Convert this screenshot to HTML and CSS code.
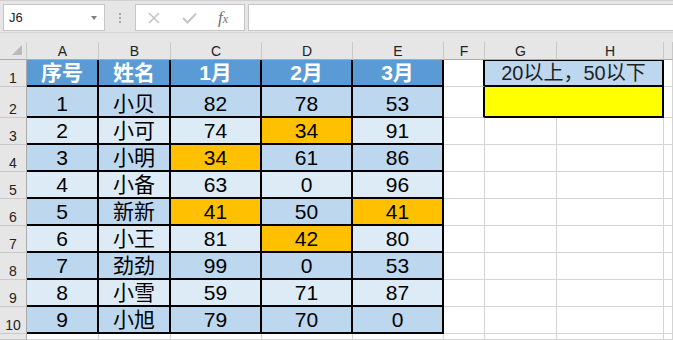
FILE: index.html
```html
<!DOCTYPE html>
<html lang="zh">
<head>
    <meta charset="UTF-8">
    <meta name="viewport" content="width=device-width, initial-scale=1.0">
    <title>成绩表</title>
    <link rel="stylesheet" href="styles.css">
</head>
<body>
<div class="toolbar">
    <div class="namebox">
        <span>J6</span>
        <span class="arrow"></span>
    </div>
    <div class="dots"><i></i><i></i><i></i></div>
    <div class="fbox">
        <svg width="12" height="12" viewBox="0 0 12 12"><path d="M1 1 L11 11 M11 1 L1 11" stroke="#c4c4c4" stroke-width="1.6" fill="none"/></svg>
        <svg width="15" height="12" viewBox="0 0 15 12"><path d="M1 6 L5.5 10.5 L14 1.5" stroke="#c4c4c4" stroke-width="2" fill="none"/></svg>
        <span class="fx">f<small>x</small></span>
    </div>
    <div class="finput"></div>
</div>

<div class="sheet">
    <!-- column headers -->
    <div class="hd corner"><span class="tri"></span></div>
    <div class="hd">A</div>
    <div class="hd">B</div>
    <div class="hd">C</div>
    <div class="hd">D</div>
    <div class="hd">E</div>
    <div class="hd">F</div>
    <div class="hd">G</div>
    <div class="hd">H</div>
    <div class="hd"></div>

    <!-- row 1 -->
    <div class="rh">1</div>
    <div class="t top">序号</div>
    <div class="t top">姓名</div>
    <div class="t top">1月</div>
    <div class="t top">2月</div>
    <div class="t top">3月</div>
    <div class="c fb"></div>
    <div class="m note">20以上，50以下</div>
    <div class="c"></div>

    <!-- row 2 -->
    <div class="rh">2</div>
    <div class="t dk">1</div>
    <div class="t dk">小贝</div>
    <div class="t dk">82</div>
    <div class="t dk">78</div>
    <div class="t dk">53</div>
    <div class="c fb"></div>
    <div class="m yellow"></div>
    <div class="c"></div>

    <!-- row 3 -->
    <div class="rh">3</div>
    <div class="t lt">2</div>
    <div class="t lt">小可</div>
    <div class="t lt">74</div>
    <div class="t or">34</div>
    <div class="t lt">91</div>
    <div class="c"></div><div class="c"></div><div class="c"></div><div class="c"></div>

    <!-- row 4 -->
    <div class="rh">4</div>
    <div class="t dk">3</div>
    <div class="t dk">小明</div>
    <div class="t or">34</div>
    <div class="t dk">61</div>
    <div class="t dk">86</div>
    <div class="c"></div><div class="c"></div><div class="c"></div><div class="c"></div>

    <!-- row 5 -->
    <div class="rh">5</div>
    <div class="t lt">4</div>
    <div class="t lt">小备</div>
    <div class="t lt">63</div>
    <div class="t lt">0</div>
    <div class="t lt">96</div>
    <div class="c"></div><div class="c"></div><div class="c"></div><div class="c"></div>

    <!-- row 6 -->
    <div class="rh">6</div>
    <div class="t dk">5</div>
    <div class="t dk">新新</div>
    <div class="t or">41</div>
    <div class="t dk">50</div>
    <div class="t or">41</div>
    <div class="c"></div><div class="c"></div><div class="c"></div><div class="c"></div>

    <!-- row 7 -->
    <div class="rh">7</div>
    <div class="t lt">6</div>
    <div class="t lt">小王</div>
    <div class="t lt">81</div>
    <div class="t or">42</div>
    <div class="t lt">80</div>
    <div class="c"></div><div class="c"></div><div class="c"></div><div class="c"></div>

    <!-- row 8 -->
    <div class="rh">8</div>
    <div class="t dk">7</div>
    <div class="t dk">劲劲</div>
    <div class="t dk">99</div>
    <div class="t dk">0</div>
    <div class="t dk">53</div>
    <div class="c"></div><div class="c"></div><div class="c"></div><div class="c"></div>

    <!-- row 9 -->
    <div class="rh">9</div>
    <div class="t lt">8</div>
    <div class="t lt">小雪</div>
    <div class="t lt">59</div>
    <div class="t lt">71</div>
    <div class="t lt">87</div>
    <div class="c"></div><div class="c"></div><div class="c"></div><div class="c"></div>

    <!-- row 10 -->
    <div class="rh">10</div>
    <div class="t dk">9</div>
    <div class="t dk">小旭</div>
    <div class="t dk">79</div>
    <div class="t dk">70</div>
    <div class="t dk">0</div>
    <div class="c"></div><div class="c"></div><div class="c"></div><div class="c"></div>

    <!-- row 11, only its top edge shows -->
    <div class="rh"></div>
    <div class="c"></div><div class="c"></div><div class="c"></div><div class="c"></div><div class="c"></div>
    <div class="c"></div><div class="c"></div><div class="c"></div><div class="c"></div>
</div>
</body>
</html>
```

FILE: styles.css
```css
* {
    box-sizing: border-box;
}

body {
    margin: 0;
    width: 673px;
    height: 340px;
    overflow: hidden;
    background-color: #e6e6e6;
    font-family: "Liberation Sans", "Noto Sans CJK SC", sans-serif;
    color: #000;
}

/* formula bar */
.toolbar {
    display: flex;
    height: 33px;
    margin-bottom: 9px;
    padding: 3px 0 0 3px;
    border-top: 1px solid #cfcfcf;
    border-bottom: 1px solid #d6d6d6;
}

.namebox {
    width: 102px;
    height: 27px;
    display: flex;
    align-items: center;
    justify-content: space-between;
    padding: 0 7px 0 5px;
    background-color: #fff;
    border: 1px solid #c6c6c6;
    font-size: 13px;
    color: #222;
}

.arrow {
    width: 0;
    height: 0;
    border-left: 3.5px solid transparent;
    border-right: 3.5px solid transparent;
    border-top: 4px solid #7f7f7f;
}

.dots {
    width: 30px;
    height: 27px;
    display: flex;
    flex-direction: column;
    align-items: center;
    justify-content: center;
    gap: 2px;
}

.dots i {
    width: 2px;
    height: 2px;
    background-color: #a8a8a8;
}

.fbox {
    width: 110px;
    height: 27px;
    display: flex;
    align-items: center;
    padding-left: 12px;
    gap: 22px;
    background-color: #fff;
    border: 1px solid #c6c6c6;
}

.fx {
    font-family: "Liberation Serif", serif;
    font-style: italic;
    font-size: 17px;
    color: #6f6f6f;
    margin-left: -1px;
}

.fx small {
    font-size: 12px;
}

.finput {
    flex: 1;
    height: 27px;
    margin-left: 3px;
    background-color: #fff;
    border: 1px solid #c6c6c6;
    border-right: none;
}

/* sheet grid */
.sheet {
    display: grid;
    grid-template-columns: 27px 72px 72px 91px 91px 91px 41px 72px 107px 1fr;
    grid-template-rows: 18px 27px 31px repeat(8, 27px) 1fr;
    height: 298px;
    background-color: #fff;
}

.hd {
    display: flex;
    justify-content: center;
    align-items: center;
    background-color: #e6e6e6;
    border-right: 1px solid #c9c9c9;
    border-bottom: 1px solid #ababab;
    font-size: 14px;
    line-height: 18px;
    color: #222;
}

.corner {
    justify-content: flex-end;
    align-items: flex-end;
    padding: 0 4px 4px 0;
}

.tri {
    width: 0;
    height: 0;
    border-left: 10px solid transparent;
    border-bottom: 10px solid #b9b9b9;
}

.rh {
    display: flex;
    justify-content: center;
    align-items: flex-end;
    background-color: #e6e6e6;
    border-right: 1px solid #ababab;
    border-bottom: 1px solid #c9c9c9;
    font-size: 14px;
    line-height: 16px;
    color: #222;
}

.c {
    border-right: 1px solid #d4d4d4;
    border-bottom: 1px solid #d4d4d4;
}

.fb {
    border-right: 2px solid #000;
}

.t {
    display: flex;
    justify-content: center;
    align-items: flex-end;
    border-right: 2px solid #000;
    border-bottom: 2px solid #000;
    font-size: 21px;
    line-height: 22px;
    padding-bottom: 1px;
}

.top {
    background-color: #5b9bd5;
    color: #fff;
    font-weight: bold;
}

.dk {
    background-color: #bdd7ee;
}

.lt {
    background-color: #ddebf7;
}

.or {
    background-color: #ffc000;
}

.m {
    grid-column: span 2;
    border-right: 2px solid #000;
    border-bottom: 2px solid #000;
}

.note {
    display: flex;
    justify-content: center;
    align-items: flex-end;
    background-color: #bdd7ee;
    border-top: 1px solid #000;
    font-size: 20px;
    line-height: 22px;
    padding-bottom: 1px;
    color: #1f1f1f;
}

.yellow {
    background-color: #ffff00;
}
```
